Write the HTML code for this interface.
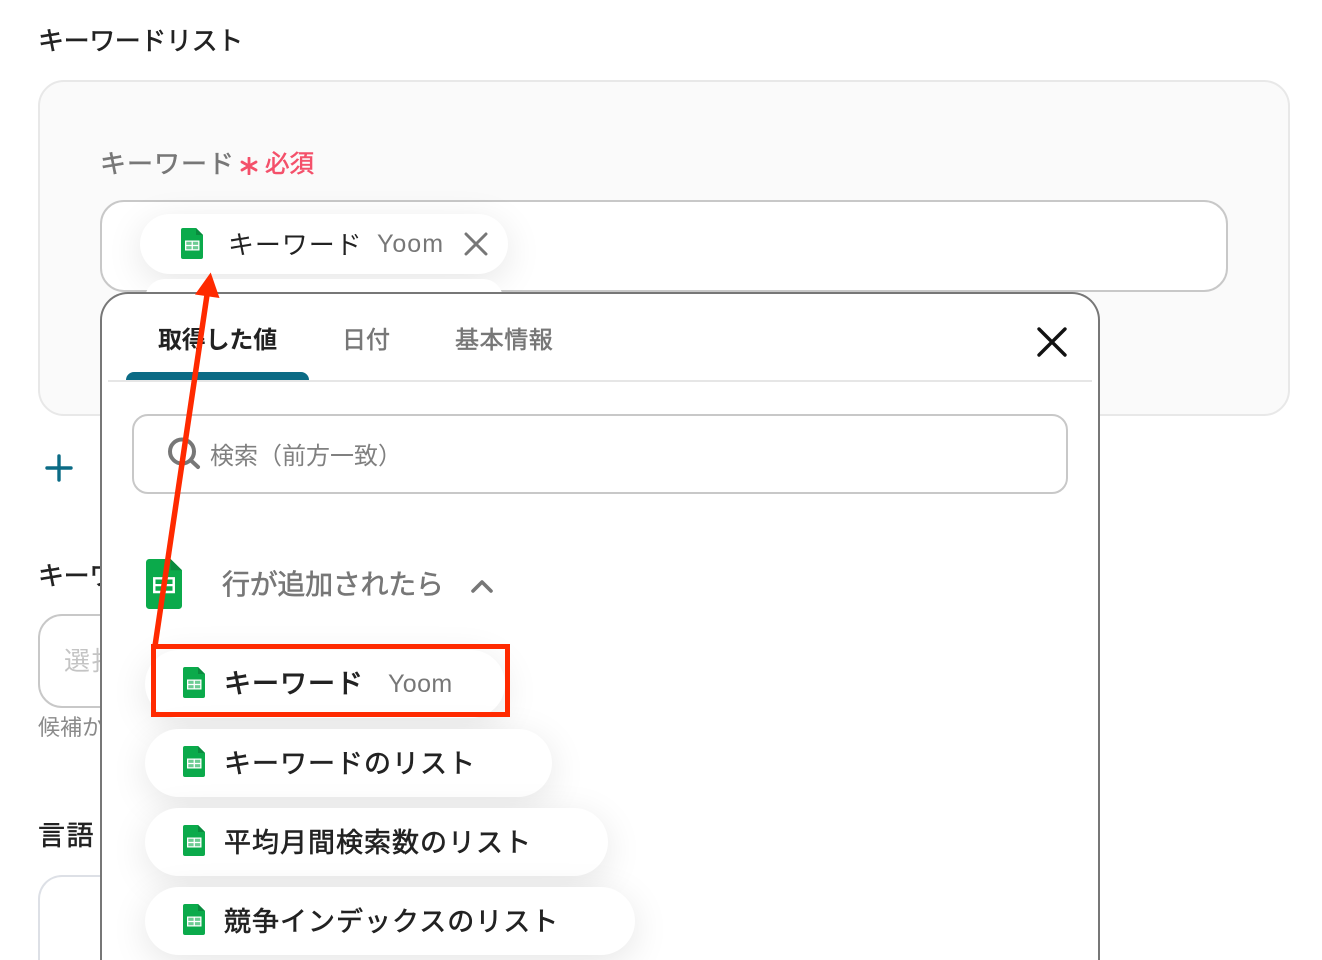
<!DOCTYPE html>
<html lang="ja"><head><meta charset="utf-8"><title>キーワードリスト</title>
<style>
html,body{margin:0;padding:0;background:#fff;overflow:hidden}
#r{position:relative;width:1322px;height:960px;overflow:hidden;background:#fff;font-family:"Liberation Sans","Noto Sans CJK JP",sans-serif;color:#222}
#r div{position:absolute;box-sizing:border-box}
.t{white-space:nowrap;line-height:1}
.m{-webkit-text-stroke:.55px currentColor}
.chip{background:#fff;border-radius:34px;height:68px;left:145px;box-shadow:0 8px 36px rgba(0,0,0,.1)}
.n{font-size:27px;letter-spacing:1px;left:224px;color:#222;-webkit-text-stroke:.6px #222}
svg{position:absolute;display:block}
</style></head><body><div id="r">
<svg width="0" height="0" style="position:absolute"><defs>
<g id="sheet"><path d="M2 0H15L22 7V29a2 2 0 0 1-2 2H2a2 2 0 0 1-2-2V2a2 2 0 0 1 2-2Z" fill="#0BAA4B"/><path d="M15 0L22 7H15Z" fill="#0A8A3E"/><rect x="4" y="12.5" width="14.5" height="10" fill="#fff"/><path d="M5.3 13.8H10.6V16.9H5.3ZM11.9 13.8H17.2V16.9H11.9ZM5.3 18.1H10.6V21.2H5.3ZM11.9 18.1H17.2V21.2H11.9Z" fill="#0BAA4B" fill-opacity=".6"/></g>
<g id="sheetb"><path d="M2 0H15L22 7V29a2 2 0 0 1-2 2H2a2 2 0 0 1-2-2V2a2 2 0 0 1 2-2Z" fill="#0BAA4B"/><path d="M15 0L22 7H15Z" fill="#0A8A3E"/><path d="M4.3 11.2H17.7V21.2H4.3ZM5.8 12.7V15.5H10.3V12.7ZM11.7 12.7V15.5H16.2V12.7ZM5.8 16.9V19.7H10.3V16.9ZM11.7 16.9V19.7H16.2V16.9Z" fill="#fff" fill-rule="evenodd"/></g>
</defs></svg>

<div class="t m" style="left:38px;top:28px;font-size:26px;letter-spacing:-.4px">キーワードリスト</div>
<div style="left:38px;top:80px;width:1252px;height:336px;background:#fafafa;border:2px solid #e8e8e8;border-radius:26px"></div>
<div class="t m" style="left:100px;top:151px;font-size:26px;letter-spacing:1px;color:#777">キーワード</div>
<svg style="left:240px;top:157px" width="18" height="18" viewBox="0 0 18 18"><path d="M9 1V17M2 5L16 13M16 5L2 13" stroke="#f4506a" stroke-width="2.8" stroke-linecap="round" fill="none"/></svg>
<div class="t m" style="left:265px;top:153px;font-size:24.5px;color:#f4506a">必須</div>
<div style="left:100px;top:200px;width:1128px;height:92px;background:#fff;border:2px solid #c8c8c8;border-radius:24px"></div>
<div style="left:140px;top:214px;width:368px;height:60px;background:#fff;border-radius:30px;box-shadow:0 8px 36px rgba(0,0,0,.1)"></div>
<div style="left:145px;top:279px;width:358px;height:40px;background:#fff;border-radius:30px"></div>
<svg style="left:181px;top:228px" width="22" height="31" viewBox="0 0 22 31"><use href="#sheet"/></svg>
<div class="t" style="left:228px;top:232px;font-size:26px;letter-spacing:.9px;color:#222">キーワード</div>
<div class="t" style="left:377px;top:232px;font-size:25px;letter-spacing:1px;color:#777">Yoom</div>
<svg style="left:464px;top:232px" width="24" height="24" viewBox="0 0 24 24"><path d="M2 2L22 22M22 2L2 22" stroke="#777" stroke-width="3" stroke-linecap="round" fill="none"/></svg>

<svg style="left:45px;top:454px" width="28" height="28" viewBox="0 0 28 28"><path d="M14 2V26M2 14H26" stroke="#0B6B85" stroke-width="3.4" stroke-linecap="round" fill="none"/></svg>
<div class="t m" style="left:38px;top:563px;font-size:26px;letter-spacing:-.4px">キーワード</div>
<div style="left:38px;top:614px;width:200px;height:94px;background:#fff;border:2px solid #c8c8c8;border-radius:24px"></div>
<div class="t" style="left:64px;top:648px;font-size:26px;letter-spacing:1.5px;color:#c4c4c4">選択</div>
<div class="t" style="left:38px;top:717px;font-size:22px;color:#8a8a8a">候補から</div>
<div class="t m" style="left:38px;top:823px;font-size:27px;letter-spacing:1.5px">言語</div>
<div style="left:38px;top:875px;width:200px;height:85px;background:#fff;border:2px solid #dde0e6;border-bottom:0;border-radius:24px 24px 0 0"></div>

<div style="left:100px;top:292px;width:1000px;height:668px;background:#fff;border:2px solid #777;border-bottom:0;border-radius:28px 28px 0 0"></div>
<div class="t" style="left:158px;top:329px;font-size:24px;font-weight:700;letter-spacing:-.2px;color:#222">取得した値</div>
<div class="t m" style="left:342px;top:329px;font-size:24px;color:#777">日付</div>
<div class="t m" style="left:455px;top:329px;font-size:24px;letter-spacing:.6px;color:#777">基本情報</div>
<div style="left:108px;top:380px;width:984px;height:2px;background:#e6e6e6"></div>
<div style="left:126px;top:372px;width:183px;height:8px;background:#0B6B85;border-radius:8px 8px 0 0"></div>
<svg style="left:1036px;top:326px" width="32" height="32" viewBox="0 0 32 32"><path d="M3 3L29 29M29 3L3 29" stroke="#111" stroke-width="3.4" stroke-linecap="round" fill="none"/></svg>
<div style="left:132px;top:414px;width:936px;height:80px;background:#fff;border:2px solid #c8c8c8;border-radius:16px"></div>
<svg style="left:167px;top:436px" width="34" height="34" viewBox="0 0 34 34"><circle cx="15" cy="15.5" r="12" fill="none" stroke="#777" stroke-width="4"/><path d="M24 24.5L31 31" stroke="#777" stroke-width="4" stroke-linecap="round"/></svg>
<div class="t" style="left:210px;top:445px;font-size:24px;color:#808080">検索（前方一致）</div>

<svg style="left:146px;top:559px" width="36" height="50" viewBox="0 0 22 31" preserveAspectRatio="none"><use href="#sheetb"/></svg>
<div class="t m" style="left:222px;top:571px;font-size:28px;letter-spacing:-.3px;color:#777">行が追加されたら</div>
<svg style="left:470px;top:577px" width="24" height="18" viewBox="0 0 24 18"><path d="M3 14L12 5L21 14" stroke="#777" stroke-width="3.6" stroke-linecap="round" stroke-linejoin="round" fill="none"/></svg>

<div class="chip" style="top:650px;width:360px"></div>
<svg style="left:183px;top:667px" width="22" height="31" viewBox="0 0 22 31"><use href="#sheet"/></svg>
<div class="t n" style="top:671px;-webkit-text-stroke:.9px #222">キーワード</div>
<div class="t" style="left:388px;top:672px;font-size:25px;letter-spacing:.4px;color:#777">Yoom</div>

<div class="chip" style="top:729px;width:407px"></div>
<svg style="left:183px;top:746px" width="22" height="31" viewBox="0 0 22 31"><use href="#sheet"/></svg>
<div class="t n" style="top:751px">キーワードのリスト</div>
<div class="chip" style="top:808px;width:463px"></div>
<svg style="left:183px;top:825px" width="22" height="31" viewBox="0 0 22 31"><use href="#sheet"/></svg>
<div class="t n" style="top:830px">平均月間検索数のリスト</div>
<div class="chip" style="top:887px;width:490px"></div>
<svg style="left:183px;top:904px" width="22" height="31" viewBox="0 0 22 31"><use href="#sheet"/></svg>
<div class="t n" style="top:909px">競争インデックスのリスト</div>

<div style="left:151px;top:644px;width:359px;height:73px;border:5px solid #FF2A00"></div>
<svg style="left:0;top:0" width="1322" height="960" viewBox="0 0 1322 960"><path d="M155 646L207 295" stroke="#FF2A00" stroke-width="5.5" fill="none"/><path d="M210.7 272.5L219.5 298L195 294.5Z" fill="#FF2A00"/></svg>
</div></body></html>
